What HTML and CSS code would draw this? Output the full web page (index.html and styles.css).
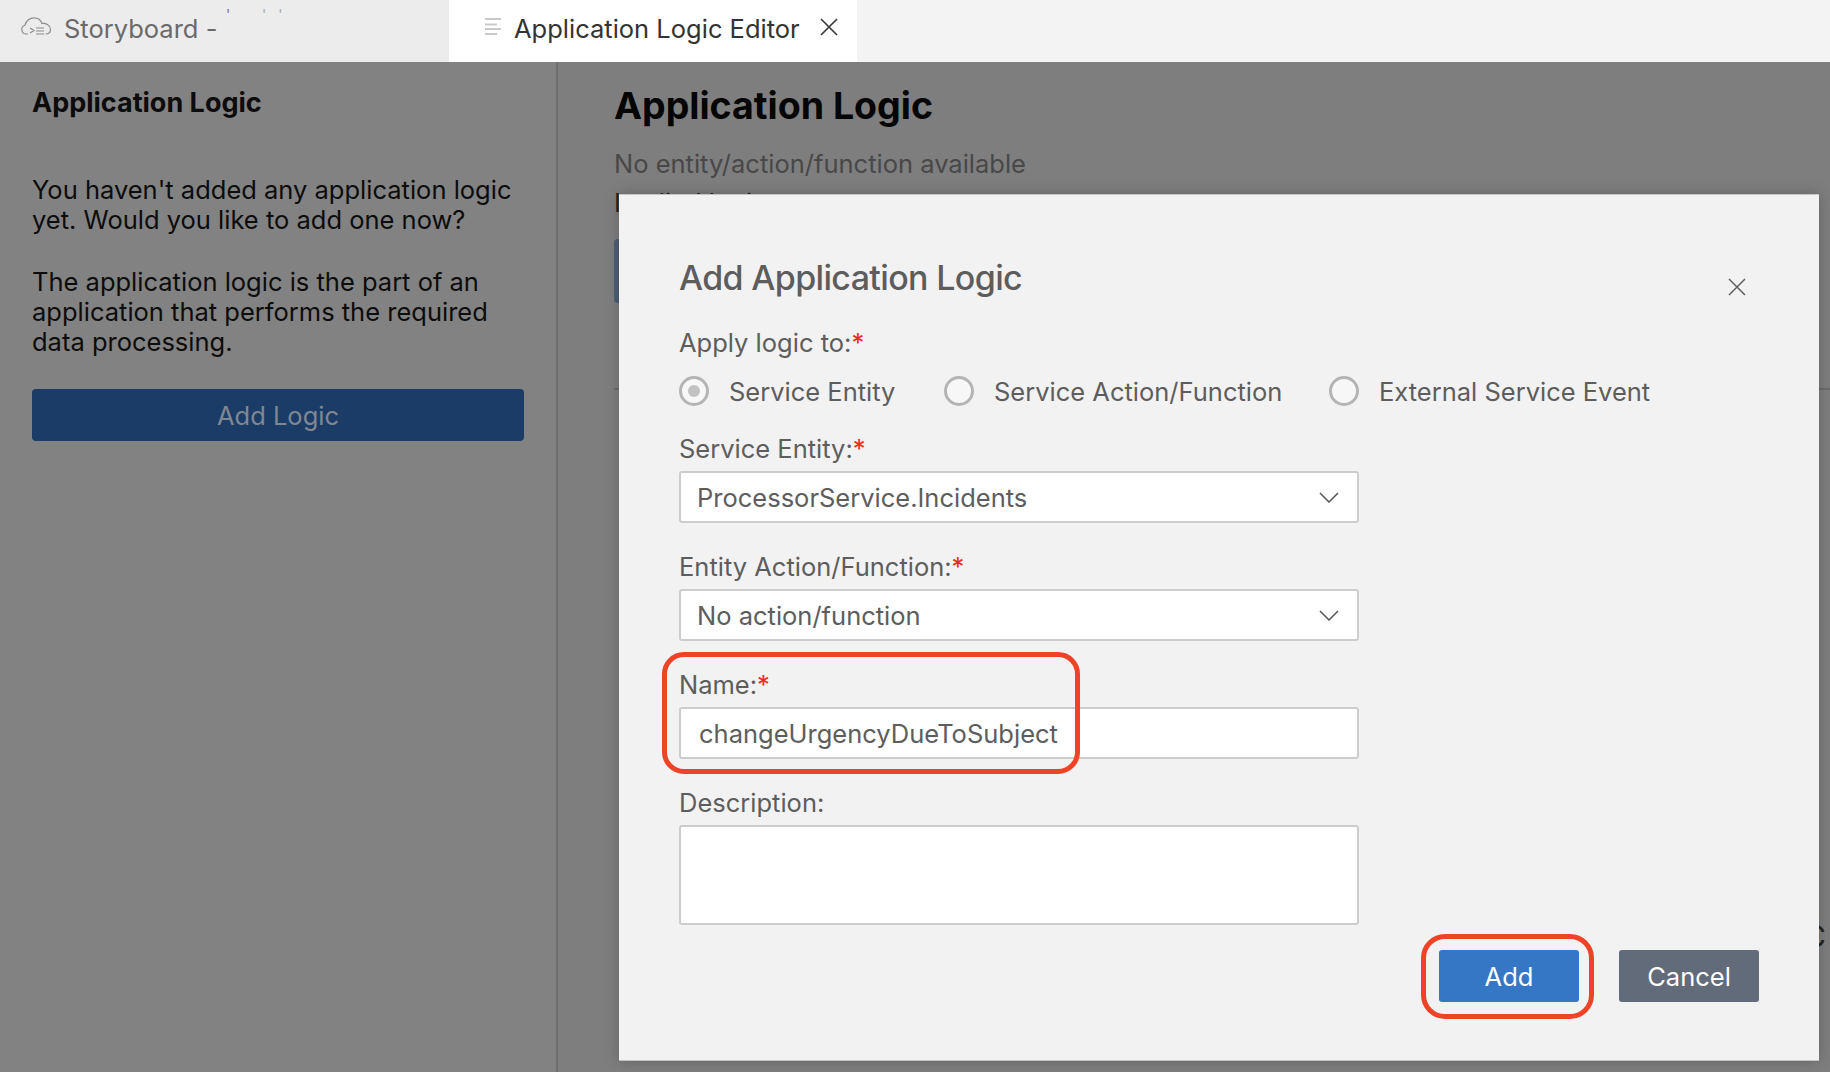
FILE: index.html
```html
<!DOCTYPE html>
<html lang="en">
<head>
<meta charset="utf-8">
<title>Application Logic Editor</title>
<link rel="stylesheet" href="styles.css">
</head>
<body>
<header class="tabbar">
  <div class="tab tab-inactive">
    <svg class="cloud-icon" viewBox="0 0 32 20" fill="none" stroke="#8c8c8c" stroke-width="1.2"><path d="M8 17H6a4.500 4.500 0 0 1-1-8.800C6 3.500 10 .8 14 .8c4 0 7 2.400 8 5.700 4-.6 8.500 2 8.500 5.700 0 2.800-2 4.800-5 4.800"/><path d="M10 11l4 2.500-4 2.500M16 11h8M16 14h8M16 17h8"/></svg>
    <span class="tab-title">Storyboard -</span>
    <span class="redacted">'</span>
    <span class="redacted-far">' '</span>
  </div>
  <div class="tab tab-active">
    <svg class="lines-icon" viewBox="0 0 16 17" stroke="#c9c9c9" stroke-width="2"><path d="M0 1h16M0 6.500h12M0 11h16M0 16h12"/></svg>
    <span class="tab-title">Application Logic Editor</span>
    <svg class="tab-close" viewBox="0 0 18 18" stroke="#3a3a3a" stroke-width="1.700"><path d="M1 1l16 16M17 1L1 17"/></svg>
  </div>
</header>
<main class="workspace">
  <aside class="sidebar">
    <h2 class="sidebar-title">Application Logic</h2>
    <p class="sidebar-text">You haven't added any application logic yet. Would you like to add one now?</p>
    <p class="sidebar-text">The application logic is the part of an application that performs the required data processing.</p>
    <button class="btn-logic" type="button">Add Logic</button>
  </aside>
  <section class="content">
    <h1 class="content-title">Application Logic</h1>
    <p class="content-note">No entity/action/function available</p>
    <p class="content-line">Implied logic</p>
    <div class="content-button"></div>
    <div class="content-rule"></div>
    <div class="content-edge">C</div>
  </section>
</main>
<div class="dialog">
  <div class="dialog-head">
    <h2 class="dialog-title">Add Application Logic</h2>
    <svg class="dialog-close" viewBox="0 0 18 18" stroke="#5f5f5f" stroke-width="1.500"><path d="M1 1l16 16M17 1L1 17"/></svg>
  </div>
  <div class="label label-apply">Apply logic to:<span class="req">*</span></div>
  <div class="radios">
    <label class="radio-item"><span class="radio radio-on"></span>Service Entity</label>
    <label class="radio-item"><span class="radio"></span>Service Action/Function</label>
    <label class="radio-item"><span class="radio"></span>External Service Event</label>
  </div>
  <div class="label label-entity">Service Entity:<span class="req">*</span></div>
  <div class="field select">ProcessorService.Incidents
    <svg class="chevron" viewBox="0 0 20 11" fill="none" stroke="#555" stroke-width="1.500"><path d="M1 1l9 9 9-9"/></svg>
  </div>
  <div class="label label-action">Entity Action/Function:<span class="req">*</span></div>
  <div class="field select">No action/function
    <svg class="chevron" viewBox="0 0 20 11" fill="none" stroke="#555" stroke-width="1.500"><path d="M1 1l9 9 9-9"/></svg>
  </div>
  <div class="label label-name">Name:<span class="req">*</span></div>
  <div class="field field-name">changeUrgencyDueToSubject</div>
  <div class="label label-desc">Description:</div>
  <div class="field field-desc"></div>
  <div class="dialog-actions">
    <button class="btn btn-add" type="button">Add</button>
    <button class="btn btn-cancel" type="button">Cancel</button>
  </div>
</div>
<div class="callout callout-name"></div>
<div class="callout callout-add"></div>
</body>
</html>
```
FILE: styles.css
```css
* { box-sizing: border-box; }
html, body { margin: 0; height: 100%; }
body {
  width: 1830px;
  height: 1072px;
  overflow: hidden;
  position: relative;
  display: flex;
  flex-direction: column;
  font-family: Inter, "Liberation Sans", sans-serif;
  font-size: 25.5px;
  background: #7f7f7f;
}
h1, h2, p { margin: 0; font: inherit; }

.tabbar { height: 62px; display: flex; flex: none; background: #f3f3f3; }
.tab { display: flex; align-items: center; height: 62px; position: relative; }
.tab-inactive { width: 449px; background: #ececec; color: #6a6a6a; padding-left: 20px; }
.tab-active { width: 408px; background: #fff; color: #333; padding-left: 36px; }
.cloud-icon { width: 32px; height: 20px; margin-right: 12px; margin-top: -8px; }
.lines-icon { width: 16px; height: 17px; margin-right: 13px; margin-top: -9px; }
.tab-close { width: 18px; height: 18px; margin-left: 20px; margin-top: -8px; }
.tab-title { white-space: nowrap; position: relative; top: -3px; }
.redacted, .redacted-far { position: absolute; top: 6px; font-size: 14px; color: #777; }
.redacted { left: 226px; }
.redacted-far { left: 262px; word-spacing: 8px; color: #aaa; }

.workspace { flex: 1; display: flex; }
.sidebar {
  width: 558px;
  flex: none;
  background: #828282;
  border-right: 2px solid #6e6e6e;
  padding: 24px 33px 0 32px;
  color: #0c0c0c;
}
.sidebar-title { font-weight: 700; font-size: 27px; line-height: 34px; margin-bottom: 55px; }
.sidebar-text { line-height: 30px; margin-bottom: 32px; }
.btn-logic {
  display: block;
  width: 492px;
  height: 52px;
  margin-top: 13px;
  border: 0;
  border-radius: 4px;
  background: #1a3c66;
  color: #7f8892;
  font: inherit;
}
.content { flex: 1; padding: 20px 0 0 56px; color: #050505; position: relative; display: flex; flex-direction: column; background: #7e7e7e; }
.content-title { font-weight: 700; font-size: 37.5px; line-height: 48px; margin-bottom: 19px; }
.content-note { color: #484848; line-height: 30px; margin-bottom: 9px; }
.content-line { color: #222; line-height: 30px; margin-bottom: 21px; }
.content-button { width: 200px; height: 64px; border-radius: 4px; background: #4d5f78; margin-bottom: 85px; }
.content-rule { height: 2px; background: #6c6c6c; }
.content-edge { align-self: flex-end; margin-top: 528px; padding-right: 4px; font-size: 30px; line-height: 36px; color: #222; }

.dialog {
  position: absolute;
  left: 619px;
  top: 194px;
  width: 1200px;
  height: 867px;
  background: #f2f2f2;
  box-shadow: 0 0 14px rgba(0, 0, 0, .22);
  border-top: 1px solid #c4c4c4;
  border-bottom: 1px solid #c4c4c4;
  padding: 0 60px;
  color: #5d5d5d;
  display: flex;
  flex-direction: column;
}
.dialog-head { display: flex; align-items: center; justify-content: space-between; height: 60px; margin-top: 53px; padding-right: 13px; }
.dialog-title { font-size: 34px; font-weight: 500; letter-spacing: -.65px; line-height: 60px; }
.dialog-close { width: 18px; height: 18px; margin-top: 18px; }

.label { line-height: 30px; }
.label-apply { margin-top: 20px; }
.label-entity { margin-top: 21px; }
.label-action { margin-top: 29px; }
.label-name { margin-top: 29px; }
.label-desc { margin-top: 29px; }
.req { color: #ea2a1d; }

.radios { display: flex; margin-top: 11px; height: 44px; align-items: center; }
.radio-item { display: flex; align-items: center; }
.radio-item:nth-child(1) { width: 265px; }
.radio-item:nth-child(2) { width: 385px; }
.radio {
  width: 30px;
  height: 30px;
  margin-right: 20px;
  border: 3px solid #b4b4b4;
  border-radius: 50%;
  background: #f7f7f7;
  display: flex;
}
.radio-on::after { content: ""; width: 12px; height: 12px; margin: auto; border-radius: 50%; background: #c2c2c2; }

.field {
  width: 680px;
  background: #fff;
  border: 2px solid #cdcdcd;
  border-radius: 3px;
  padding-left: 16px;
  display: flex;
  align-items: center;
  justify-content: space-between;
}
.select { height: 52px; margin-top: 7px; padding-right: 18px; }
.field-name { height: 52px; margin-top: 7px; padding-left: 18px; }
.field-desc { height: 100px; margin-top: 7px; }
.chevron { width: 20px; height: 11px; }

.dialog-actions { display: flex; gap: 40px; margin-top: 25px; padding-left: 760px; }
.btn { width: 140px; height: 52px; border: 0; border-radius: 3px; color: #fff; font: inherit; }
.btn-add { background: #3677c5; }
.btn-cancel { background: #626b7a; }

.callout { position: absolute; border: 5px solid #ee4327; }
.callout-name { left: 662px; top: 652px; width: 418px; height: 122px; border-radius: 22px; }
.callout-add { left: 1421px; top: 934px; width: 173px; height: 85px; border-radius: 24px; }
```
